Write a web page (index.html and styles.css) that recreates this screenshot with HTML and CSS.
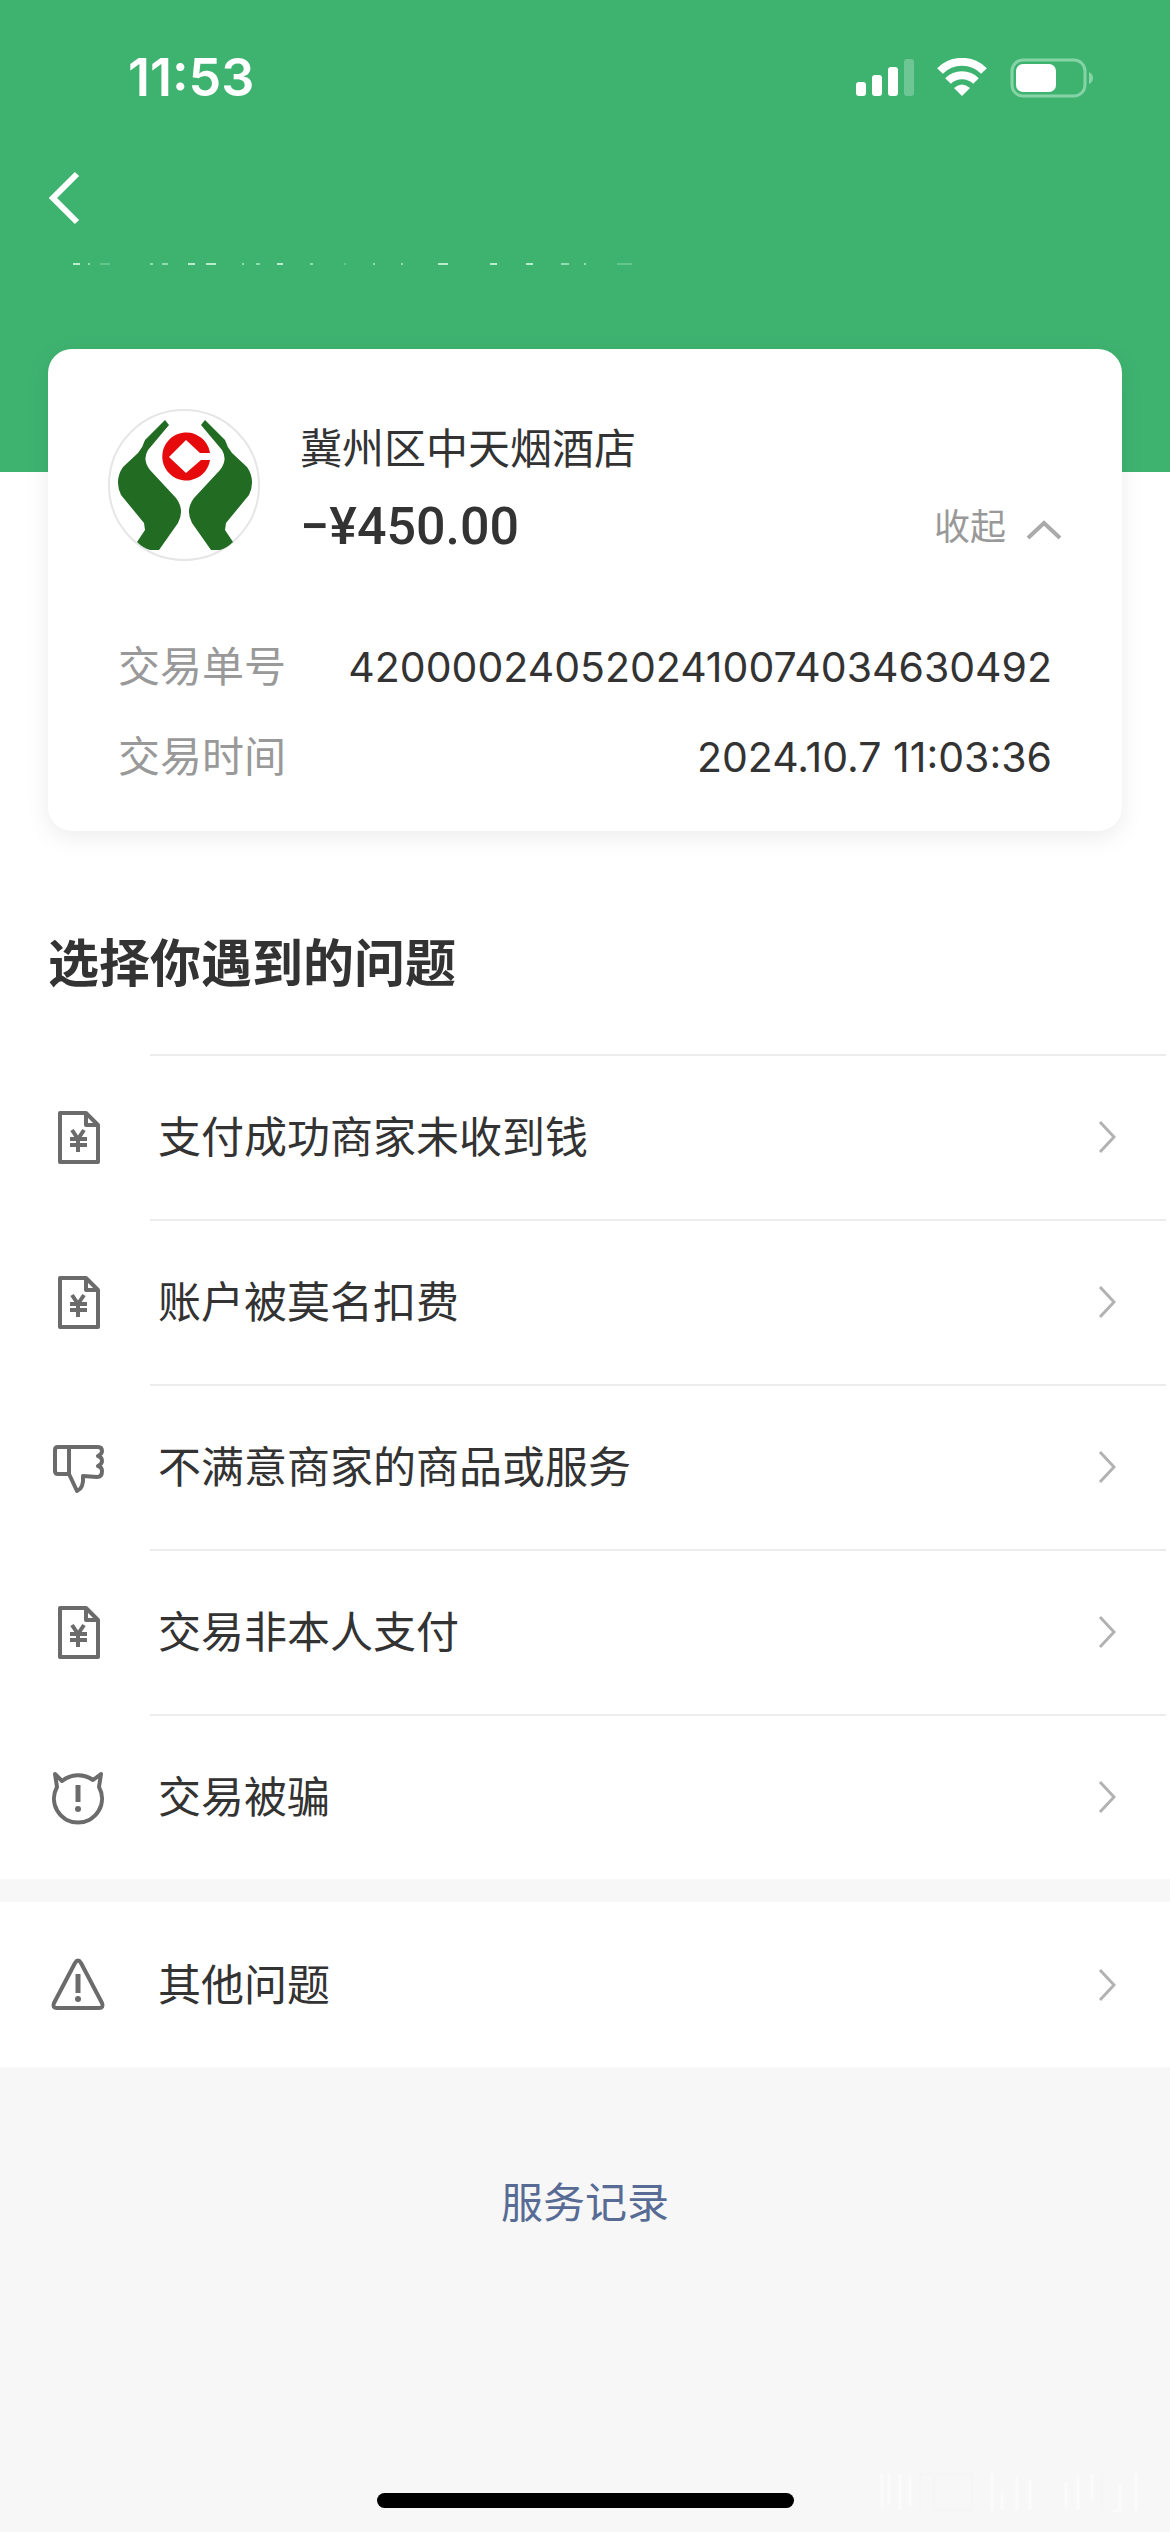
FILE: index.html
```html
<!DOCTYPE html>
<html lang="zh-CN">
<head>
<meta charset="utf-8">
<meta name="viewport" content="width=device-width, initial-scale=1">
<title>选择你遇到的问题</title>
<link rel="stylesheet" href="styles.css">
</head>
<body>
<svg class="defs" aria-hidden="true">
  <symbol id="icon-bill" viewBox="0 0 56 56">
    <path d="M10 4h26l12 12v37H10z"/>
    <path d="M36 4v12h12"/>
    <path d="M22 21l6 9 6-9M20 30h17M20 36h17M28 30v13"/>
  </symbol>
  <symbol id="icon-down" viewBox="0 0 56 56">
    <path d="M8 8h40q4 0 4 4 0 3-4 5 4 1 4 5 0 3-4 5 4 1 4 5 0 6-5 6l-14-1q1 12-6 15L19 35H8q-3 0-3-3V11q0-3 3-3"/>
    <path d="M19 8v27"/>
  </symbol>
  <symbol id="icon-devil" viewBox="0 0 56 56">
    <path d="M12 12L5 5l2 13a24 24 0 1 0 42 0l2-13-8 6a26 26 0 0 0-31 1z"/>
    <path class="mark" d="M28 16v17"/>
    <circle class="dot" cx="28" cy="40" r="3"/>
  </symbol>
  <symbol id="icon-warn" viewBox="0 0 56 56">
    <path d="M25 6q3-5 6 0l21 40q2 5-3 5H7q-5 0-3-5z"/>
    <path class="mark" d="M28 17v19"/>
    <circle class="dot" cx="28" cy="42" r="3"/>
  </symbol>
  <symbol id="icon-next" viewBox="0 0 18 34">
    <path d="M2 2l14 15L2 32"/>
  </symbol>
</svg>

<header class="top">
  <div class="status">
    <span class="clock">11:53</span>
    <div class="status-icons">
      <svg width="58" height="40" viewBox="0 0 58 40" fill="#fff">
        <rect x="0" y="24" width="10" height="14" rx="3"/>
        <rect x="16" y="17" width="10" height="21" rx="3"/>
        <rect x="32" y="9" width="10" height="29" rx="3"/>
        <rect x="48" y="1" width="10" height="37" rx="3" opacity=".25"/>
      </svg>
      <svg width="52" height="40" viewBox="0 0 52 40" fill="none" stroke="#fff" stroke-width="8">
        <path d="M4 13a31 31 0 0 1 44 0"/>
        <path d="M12 23a20 20 0 0 1 28 0"/>
        <path d="M18 30q8-7 16 0l-8 8z" fill="#fff" stroke="none"/>
      </svg>
      <svg width="84" height="40" viewBox="0 0 84 40" fill="none">
        <rect x="2" y="2" width="73" height="36" rx="11" stroke="#86d3a5" stroke-width="3"/>
        <rect x="6" y="6" width="40" height="28" rx="7" fill="#fff"/>
        <path d="M79 14q4 2 4 6t-4 6z" fill="#86d3a5"/>
      </svg>
    </div>
  </div>
  <button class="back" type="button" aria-label="返回">
    <svg width="34" height="56" viewBox="0 0 34 56"><path d="M31 4L7 28l24 24" fill="none" stroke="#fff" stroke-width="6"/></svg>
  </button>
  <svg class="sliver" width="562" height="4" viewBox="0 0 562 4" fill="none" stroke-width="2" aria-hidden="true">
    <path stroke="#b9ecca" d="M1 1h7M116 1h7M134 1h10M205 1h6M366 1h10M418 1h7M454 1h7"/>
    <path stroke="#8fdcae" d="M16 1h2M78 1h3M90 1h6M170 1h2M184 1h4M238 1h3M301 1h2M329 1h2M489 1h8M512 1h2"/>
    <path stroke="#63c68c" d="M28 1h10M272 1h2M545 1h15"/>
  </svg>
</header>

<main>
  <section class="card">
    <div class="merchant">
      <svg class="logo" width="152" height="152" viewBox="0 0 152 152">
        <circle cx="76" cy="76" r="75" fill="#fff" stroke="#e6e6e8" stroke-width="2"/>
        <g fill="#216b22">
          <path id="hand" d="M57 11l4 5-21 25q-6 10 2 20l26 28q9 12 2 25L51 141H42q-7-2-13-8l8-12-1-7L13 86q-7-15 2-28l15-14q5-6 7-13z"/>
          <use href="#hand" transform="matrix(-1 0 0 1 154 0)"/>
        </g>
        <path d="M102 44a24 24 0 1 0 0 7H93L78 64 61 48 78 31 92 44z" fill="#e60a0c"/>
      </svg>
      <div class="merchant-text">
        <h2 class="name">冀州区中天烟酒店</h2>
        <div class="amount-row">
          <strong class="amount">−¥450.00</strong>
          <button class="fold" type="button">收起
            <svg width="36" height="26" viewBox="0 0 36 26"><path d="M2 24L18 9l16 15" fill="none" stroke="#aaa" stroke-width="4"/></svg>
          </button>
        </div>
      </div>
    </div>
    <dl class="details">
      <div class="detail"><dt>交易单号</dt><dd>4200002405202410074034630492</dd></div>
      <div class="detail"><dt>交易时间</dt><dd>2024.10.7 11:03:36</dd></div>
    </dl>
  </section>

  <h1 class="title">选择你遇到的问题</h1>

  <nav class="list">
    <a class="row" href="#unpaid"><svg class="icon"><use href="#icon-bill"/></svg><span class="label">支付成功商家未收到钱</span><svg class="next"><use href="#icon-next"/></svg></a>
    <a class="row" href="#charged"><svg class="icon"><use href="#icon-bill"/></svg><span class="label">账户被莫名扣费</span><svg class="next"><use href="#icon-next"/></svg></a>
    <a class="row" href="#service"><svg class="icon"><use href="#icon-down"/></svg><span class="label">不满意商家的商品或服务</span><svg class="next"><use href="#icon-next"/></svg></a>
    <a class="row" href="#not-me"><svg class="icon"><use href="#icon-bill"/></svg><span class="label">交易非本人支付</span><svg class="next"><use href="#icon-next"/></svg></a>
    <a class="row" href="#fraud"><svg class="icon"><use href="#icon-devil"/></svg><span class="label">交易被骗</span><svg class="next"><use href="#icon-next"/></svg></a>
  </nav>
  <nav class="list list-other">
    <a class="row" href="#other"><svg class="icon"><use href="#icon-warn"/></svg><span class="label">其他问题</span><svg class="next"><use href="#icon-next"/></svg></a>
  </nav>
</main>

<footer class="foot">
  <a class="records" href="#records">服务记录</a>
  <div class="home-bar"></div>
  <svg class="ghost" width="272" height="40" viewBox="0 0 272 40" fill="none" stroke="#fbfbfb" stroke-width="3" aria-hidden="true">
    <path d="M8 2v34M15 2v30M26 2v36M36 4v30M98 6v32M118 2v36M128 20v18M143 4v34M156 8v30M192 10v26M204 4v34M218 2v26M246 12v26l-8 2M262 2v36"/>
    <path stroke="#f5f5f5" d="M46 38V2h14v36M62 2h36v36H62M228 2v36"/>
  </svg>
</footer>
</body>
</html>
```
FILE: styles.css
```css
* {
  box-sizing: border-box;
}

body {
  margin: 0;
  min-height: 100vh;
  display: flex;
  flex-direction: column;
  background: #f7f7f7;
  color: #333;
  font-family: Inter, "Noto Sans CJK SC", sans-serif;
  font-size: 42px;
  line-height: 60px;
}

button {
  padding: 0;
  border: 0;
  background: none;
  font: inherit;
}

svg {
  display: block;
  flex: none;
}

a {
  color: inherit;
  text-decoration: none;
}

.defs {
  width: 0;
  height: 0;
  position: absolute;
}

.top {
  height: 472px;
  background: #3eb370;
}

.status {
  display: flex;
  justify-content: space-between;
  align-items: center;
  padding: 48px 76px 0 128px;
  color: #fff;
}

.clock {
  font-size: 52px;
  font-weight: 600;
}

.status-icons {
  display: flex;
  align-items: center;
  gap: 22px;
}

.back {
  display: block;
  margin: 62px 0 0 46px;
}

.sliver {
  margin: 37px 0 0 72px;
}

main {
  background: #fff;
}

.card {
  position: relative;
  margin: -123px 48px 0;
  padding: 60px 60px 44px;
  border-radius: 24px;
  background: #fff;
  box-shadow: 0 6px 24px rgba(0, 0, 0, .08);
}

.merchant {
  display: flex;
  gap: 40px;
}

.merchant-text {
  flex: 1;
  padding-top: 10px;
}

.name {
  margin: 0;
  font-size: 42px;
  font-weight: 400;
}

.amount-row {
  display: flex;
  justify-content: space-between;
  align-items: center;
  margin-top: 18px;
}

.amount {
  font-family: Roboto, sans-serif;
  font-size: 52px;
  font-weight: 500;
}

.fold {
  display: flex;
  align-items: center;
  gap: 20px;
  color: #999;
  font-size: 36px;
}

.details {
  display: grid;
  gap: 30px;
  margin: 76px 10px 0;
}

.detail {
  display: flex;
  justify-content: space-between;
}

.detail dt {
  color: #999;
}

.detail dd {
  margin: 0;
  font-size: 41px;
}

.title {
  margin: 103px 48px 60px;
  font-size: 51px;
  font-weight: 700;
}

.row {
  display: flex;
  align-items: center;
  height: 165px;
  padding: 0 54px 0 50px;
  background: linear-gradient(#ececec, #ececec) 150px 0 / calc(100% - 154px) 2px no-repeat;
}

.icon {
  width: 56px;
  height: 56px;
  margin-right: 52px;
  fill: none;
  stroke: #6b6b6b;
  stroke-width: 4;
  stroke-linejoin: round;
}

.mark {
  stroke-width: 5;
}

.dot {
  fill: #6b6b6b;
  stroke: none;
}

.label {
  flex: 1;
  font-size: 43px;
}

.next {
  width: 18px;
  height: 34px;
  fill: none;
  stroke: #b2b2b2;
  stroke-width: 3;
}

.list-other {
  border-top: 23px solid #f7f7f7;
}

.list-other .row {
  background: none;
}

.foot {
  flex: 1;
  position: relative;
  display: flex;
  flex-direction: column;
  justify-content: space-between;
  align-items: center;
  padding: 106px 0 24px;
}

.records {
  color: #576b95;
}

.home-bar {
  width: 417px;
  height: 15px;
  border-radius: 8px;
  background: #000;
}

.ghost {
  position: absolute;
  right: 24px;
  bottom: 20px;
}
```
